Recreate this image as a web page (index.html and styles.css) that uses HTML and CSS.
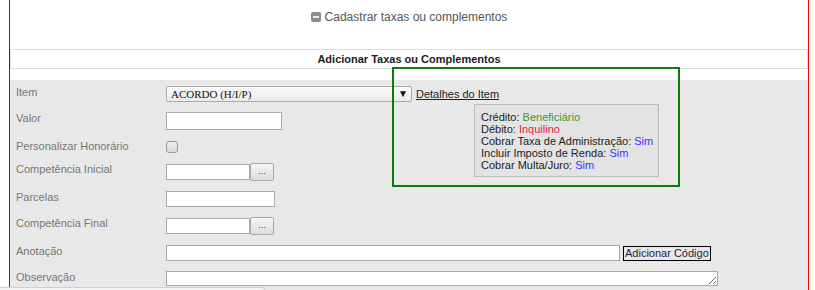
FILE: index.html
```html
<!DOCTYPE html>
<html lang="pt-BR">
<head>
    <meta charset="UTF-8">
    <title>Cadastrar taxas ou complementos</title>
    <link rel="stylesheet" href="styles.css">
</head>
<body>

<div class="page">
    <div class="title">
        <svg class="toggle-icon" width="10" height="10" viewBox="0 0 10 10">
            <rect x="0" y="0" width="10" height="10" rx="2" fill="#8c8c8c"/>
            <rect x="2" y="4" width="6" height="2" fill="#eeeeee"/>
        </svg>Cadastrar taxas ou complementos
    </div>

    <div class="section-head">Adicionar Taxas ou Complementos</div>

    <div class="form-area">
        <div class="row">
            <label for="item">Item</label>
            <div class="field">
                <div class="select-wrap">
                    <select id="item">
                        <option>ACORDO (H/I/P)</option>
                    </select>
                    <span class="arrow">&#9660;</span>
                </div>
                <a class="details-link" href="#">Detalhes do Item</a>

                <div class="details-pop">
                    <div>Crédito: <span class="c-green">Beneficiário</span></div>
                    <div>Débito: <span class="c-red">Inquilino</span></div>
                    <div>Cobrar Taxa de Administração: <span class="c-blue">Sim</span></div>
                    <div>Incluir Imposto de Renda: <span class="c-blue">Sim</span></div>
                    <div>Cobrar Multa/Juro: <span class="c-blue">Sim</span></div>
                </div>
            </div>
        </div>

        <div class="row">
            <label for="valor">Valor</label>
            <div class="field">
                <input type="text" id="valor" class="w-valor tall">
            </div>
        </div>

        <div class="row">
            <label for="honorario">Personalizar Honorário</label>
            <div class="field">
                <input type="checkbox" id="honorario" class="check">
            </div>
        </div>

        <div class="row">
            <label for="compInicial">Competência Inicial</label>
            <div class="field">
                <input type="text" id="compInicial" class="w-date">
                <button type="button" class="pick">...</button>
            </div>
        </div>

        <div class="row">
            <label for="parcelas">Parcelas</label>
            <div class="field">
                <input type="text" id="parcelas" class="w-parcelas">
            </div>
        </div>

        <div class="row">
            <label for="compFinal">Competência Final</label>
            <div class="field">
                <input type="text" id="compFinal" class="w-date">
                <button type="button" class="pick">...</button>
            </div>
        </div>

        <div class="row">
            <label for="anotacao">Anotação</label>
            <div class="field">
                <input type="text" id="anotacao" class="w-anotacao">
                <button type="button" class="add-code">Adicionar Código</button>
            </div>
        </div>

        <div class="row">
            <label for="observacao">Observação</label>
            <div class="field">
                <textarea id="observacao" class="w-obs"></textarea>
            </div>
        </div>
    </div>

    <div class="highlight"></div>
</div>

<div class="status-strip"></div>

</body>
</html>
```

FILE: styles.css
```css
body {
    margin: 0;
    background-color: #fff;
    color: #333;
    font-family: "Liberation Sans", Arial, sans-serif;
    font-size: 11px;
    overflow: hidden;
}

.page {
    position: relative;
    box-sizing: border-box;
    width: 800px;
    min-height: 290px;
    margin-left: 9px;
    border-left: 1px solid #cc0000;
    border-right: 1px solid #ff0000;
}

.title {
    box-sizing: border-box;
    height: 49px;
    padding-top: 10px;
    text-align: center;
    font-size: 12px;
    line-height: 14px;
    color: #555;
}

.toggle-icon {
    vertical-align: -1px;
    margin-right: 4px;
}

.section-head {
    box-sizing: border-box;
    height: 20px;
    margin-bottom: 11px;
    border: 1px solid #ddd;
    line-height: 18px;
    text-align: center;
    font-weight: bold;
    color: #222;
}

.form-area {
    background-color: #e8e8e8;
    padding: 1px 0 0 6px;
}

.row {
    display: flex;
    align-items: flex-start;
    padding: 5px 0;
}

.row label {
    flex: none;
    width: 150px;
    line-height: 13px;
    color: #777;
}

.field {
    position: relative;
    display: flex;
    align-items: center;
}

input[type="text"], textarea {
    box-sizing: border-box;
    height: 16px;
    margin: 0;
    padding: 0 2px;
    border: 1px solid #aaa;
    background-color: #fff;
    font-family: "Liberation Sans", Arial, sans-serif;
    font-size: 11px;
}

input.tall {
    height: 18px;
}

.w-valor {
    width: 116px;
}

.w-date {
    width: 84px;
}

.w-parcelas {
    width: 109px;
}

.w-anotacao {
    width: 454px;
}

.w-obs {
    display: block;
    width: 552px;
    height: 15px;
    resize: both;
}

.check {
    appearance: none;
    box-sizing: border-box;
    width: 12px;
    height: 12px;
    margin: 1px 0 0 0;
    border: 1px solid #9a9a9a;
    border-radius: 3px;
    background: linear-gradient(#ececec, #d9d9d9);
}

.select-wrap {
    position: relative;
    width: 246px;
    height: 16px;
}

.select-wrap select {
    appearance: none;
    box-sizing: border-box;
    width: 100%;
    height: 16px;
    margin: 0;
    padding: 0 0 0 4px;
    border: 1px solid #aaa;
    border-radius: 2px;
    background: linear-gradient(#fafafa, #ebebeb);
    color: #111;
    font-family: "Liberation Serif", "Times New Roman", serif;
    font-size: 11px;
    line-height: 14px;
}

.arrow {
    position: absolute;
    right: 4px;
    top: 2px;
    font-size: 10px;
    line-height: 12px;
    color: #111;
    pointer-events: none;
}

.details-link {
    margin-left: 4px;
    color: #222;
    text-decoration: underline;
}

.details-pop {
    position: absolute;
    left: 308px;
    top: 18px;
    box-sizing: border-box;
    width: 185px;
    height: 73px;
    padding: 6px 6px 4px 6px;
    border: 1px solid #bbb;
    background-color: #e3e3e3;
    color: #222;
    line-height: 12px;
    white-space: nowrap;
}

.c-green {
    color: #3a9a2e;
}

.c-red {
    color: #f0163e;
}

.c-blue {
    color: #3636ff;
}

.pick {
    box-sizing: border-box;
    width: 24px;
    height: 18px;
    margin: 0;
    padding: 0 0 3px 0;
    border: 1px solid #aaa;
    border-radius: 2px;
    background: linear-gradient(#f6f6f6, #dcdcdc);
    color: #333;
    font-family: "Liberation Sans", Arial, sans-serif;
    font-size: 9px;
    line-height: 10px;
}

.add-code {
    box-sizing: border-box;
    height: 15px;
    margin: 1px 0 0 3px;
    padding: 0 1px;
    border: 1px solid #000;
    border-radius: 0;
    background-color: #e8e8e8;
    color: #1c1c44;
    font-family: "Liberation Sans", Arial, sans-serif;
    font-size: 11px;
    line-height: 13px;
}

.highlight {
    position: absolute;
    left: 382px;
    top: 67px;
    box-sizing: border-box;
    width: 288px;
    height: 120px;
    border: 2px solid #0d7a0d;
    pointer-events: none;
}

.status-strip {
    position: absolute;
    left: 0;
    top: 287px;
    box-sizing: border-box;
    width: 265px;
    height: 4px;
    border-top: 1px solid #cfcfcf;
    border-right: 1px solid #cfcfcf;
    border-top-right-radius: 3px;
    background-color: #f3f3f3;
}
```
